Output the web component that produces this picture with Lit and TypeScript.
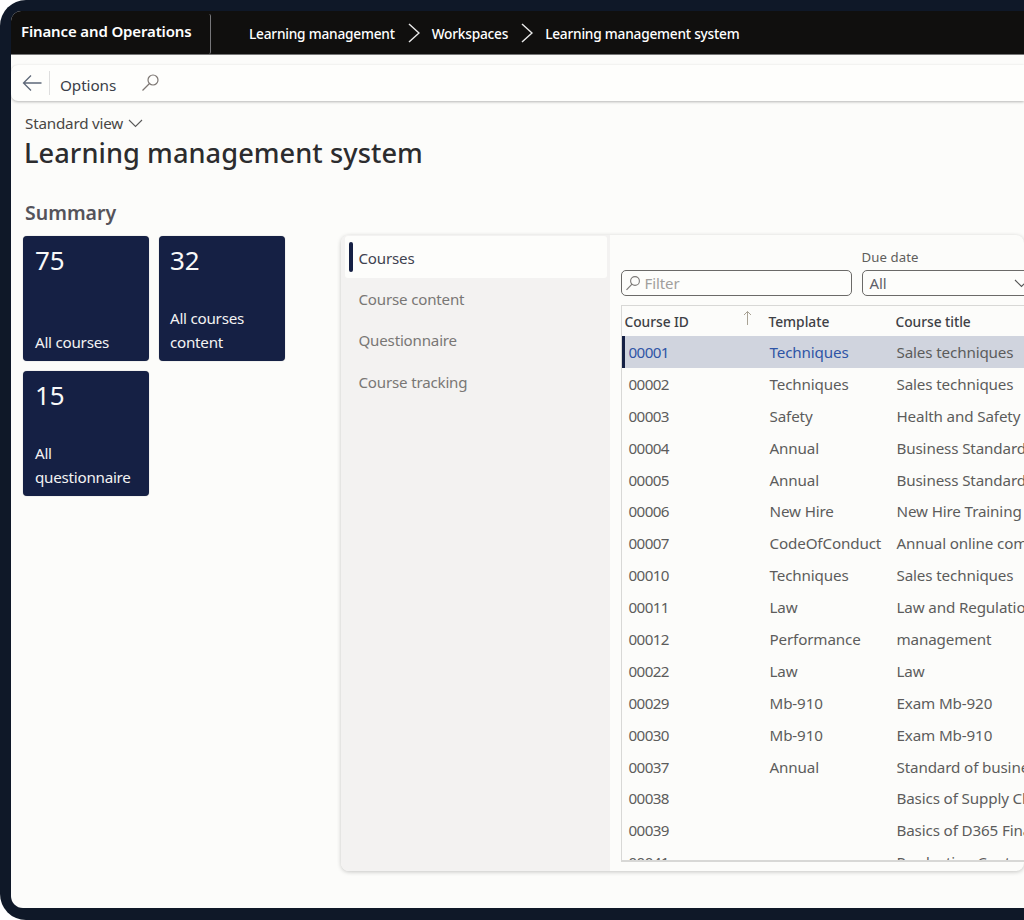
import { LitElement, html, css, svg } from "lit";
import { customElement } from "lit/decorators.js";

const rows: [string, string, string][] = [
  ["00001", "Techniques", "Sales techniques"],
  ["00002", "Techniques", "Sales techniques"],
  ["00003", "Safety", "Health and Safety"],
  ["00004", "Annual", "Business Standards"],
  ["00005", "Annual", "Business Standards"],
  ["00006", "New Hire", "New Hire Training"],
  ["00007", "CodeOfConduct", "Annual online compliance"],
  ["00010", "Techniques", "Sales techniques"],
  ["00011", "Law", "Law and Regulations"],
  ["00012", "Performance", "management"],
  ["00022", "Law", "Law"],
  ["00029", "Mb-910", "Exam Mb-920"],
  ["00030", "Mb-910", "Exam Mb-910"],
  ["00037", "Annual", "Standard of business"],
  ["00038", "", "Basics of Supply Chain"],
  ["00039", "", "Basics of D365 Finance"],
  ["00041", "", "Production Control"],
];

const chevron = svg`<path d="M1 1l10 9-10 9" fill="none" stroke="currentColor" stroke-width="1.5"/>`;

@customElement("app-root")
export class AppRoot extends LitElement {
  static styles = css`
    :host { display: block; width: 1024px; height: 920px; overflow: hidden; background: #fff;
      font-family: "Noto Sans", "Open Sans", sans-serif; color: #323130; }
    * { box-sizing: border-box; }
    .frame { height: 920px; background: #0f1828; border-radius: 26px 0 0 26px; padding: 11px 0 12px 11px; }
    .screen { height: 897px; background: #fcfcfa; border-radius: 10px 0 0 12px; overflow: hidden; }
    .top { height: 44px; background: #100f0e; color: #fff; display: flex; align-items: center; border-bottom: 1px solid #777; }
    .brand { width: 200px; height: 40px; margin-top: 2px; padding-left: 10px; display: flex; align-items: center; font-size: 15px; font-weight: 600; letter-spacing: -0.14px; border-right: 1px solid #77777a; padding-bottom: 6px; border-radius: 0 2px 2px 0; }
    .crumbs { display: flex; align-items: center; padding-left: 38px; padding-top: 2px; font-size: 13.7px; letter-spacing: -0.22px; font-weight: 500; }
    .crumbs svg { width: 12px; height: 20px; margin: -2px 12px 0 13px; color: #e6e6e6; }
    .bar { height: 36px; margin-top: 10px; background: #fefefc; border-radius: 7px 0 0 7px; box-shadow: 0 1px 3px rgba(0,0,0,.28); display: flex; align-items: center; }
    .back { width: 20px; height: 18px; margin-left: 11px; color: #5e6878; }
    .sep { width: 1px; height: 24px; background: #dedede; margin-left: 7px; }
    .opt { margin-left: 10px; font-size: 15.3px; letter-spacing: -0.1px; color: #3b3f48; padding-top: 3px; }
    .find { width: 19px; height: 19px; margin-left: 25px; color: #7d7773; margin-top: -1px; }
    .view { margin: 13px 0 0 14px; height: 18px; font-size: 15.2px; letter-spacing: -0.2px; color: #484644; display: flex; align-items: center; }
    .view svg { width: 15px; height: 9px; margin-left: 5px; color: #5a5a5a; }
    h1 { margin: 1px 0 0 13px; font-size: 27.2px; font-weight: 500; line-height: 40px; height: 40px; color: #2c2c2e; letter-spacing: .06px; white-space: nowrap; }
    h2 { margin: 27px 0 0 14px; font-size: 19.5px; line-height: 26px; height: 26px; font-weight: 600; color: #55535a; }
    .content { display: flex; margin-top: 9px; align-items: flex-start; }
    .tiles { width: 262px; margin: 1px 0 0 12px; display: grid; grid-template-columns: 125.5px 125.5px; grid-auto-rows: 125px; gap: 10px 10.5px; }
    .tile { background: #152044; border-radius: 4px; color: #fff; padding: 8px 12px 7px; display: flex; flex-direction: column; box-shadow: 0 0 1px rgba(0,0,0,.4); }
    .num { font-size: 26px; line-height: 32px; color: #f8f8f8; }
    .tile:nth-child(2) { padding-left: 11px; }
    .lab { margin-top: auto; font-size: 15.2px; line-height: 23.5px; letter-spacing: -0.25px; color: #f3f3f3; }
    .panel { margin-left: 56px; width: 800px; height: 636px; display: flex; background: #fcfcfa; border-radius: 8px; box-shadow: 0 1px 4px rgba(0,0,0,.22); overflow: hidden; }
    .tabs { width: 269px; flex: none; background: #f3f2f1; padding: 1px 3px 0 4px; display: flex; flex-direction: column; }
    .tab { height: 41.5px; display: flex; align-items: center; padding: 1px 0 0 14px; font-size: 15.1px; letter-spacing: -0.18px; color: #797775; position: relative; }
    .tab.on { background: #fdfdfb; color: #3f4250; border-radius: 3px; padding-top: 3px; }
    .tab.on::before { content: ""; position: absolute; left: 4px; top: 6px; bottom: 6px; width: 4px; background: #152044; border-radius: 2px; }
    .main { flex: 1; padding: 13px 0 0 11px; min-width: 0; }
    .filters { display: flex; align-items: flex-end; gap: 10px; height: 48px; }
    .box { height: 26px; border: 1.5px solid #6b6a68; border-radius: 5px; display: flex; align-items: center; background: #fdfdfb; font-size: 15px; padding-left: 7px; letter-spacing: -0.1px; }
    .box.f { width: 231px; flex: none; color: #a19f9d; padding-left: 3px; }
    .box.f svg { width: 16px; height: 16px; margin-right: 4px; color: #7d7a78; }
    .dd { width: 300px; flex: none; }
    .dd label { display: block; font-size: 13.2px; line-height: 18px; letter-spacing: .1px; color: #605e5c; height: 22px; }
    .dd .box { color: #5e6068; position: relative; }
    .dd .box svg { position: absolute; left: 151px; top: 8px; width: 15px; height: 9px; color: #555; }
    .grid { margin-top: 9px; width: 700px; height: 557px; border: 1px solid #d8d8d6; border-width: 1px 0 2px 1.5px; overflow: hidden; }
    .head, .row { display: grid; align-items: center; white-space: nowrap; }
    .head { grid-template-columns: 144px 127px 1fr; height: 30px; padding: 1px 0 0 3px; font-size: 13.8px; font-weight: 500; letter-spacing: -0.05px; color: #3e4045; }
    .head span:first-child { position: relative; }
    .head svg { position: absolute; left: 118px; top: -2px; width: 9px; height: 16px; color: #a8a294; }
    .row { grid-template-columns: 141px 127px 1fr; height: 31.9px; padding-left: 7px; font-size: 15.2px; letter-spacing: -0.14px; color: #5c5c5c; position: relative; }
    .row .id { letter-spacing: -0.6px; }
    .row.sel { background: #d0d4de; }
    .row.sel::before { content: ""; position: absolute; left: 0; top: 0; bottom: 0; width: 3px; background: #152044; }
    .row.sel .lnk { color: #2f55a6; }
  `;

  render() {
    return html`<div class="frame"><div class="screen">
      <header class="top">
        <div class="brand">Finance and Operations</div>
        <nav class="crumbs">
          <span>Learning management</span><svg viewBox="0 0 12 20">${chevron}</svg>
          <span>Workspaces</span><svg viewBox="0 0 12 20">${chevron}</svg>
          <span>Learning management system</span>
        </nav>
      </header>
      <div class="bar">
        <svg class="back" viewBox="0 0 20 18"><path d="M19.5 9H1.5M9 1.5 1.5 9 9 16.5" fill="none" stroke="currentColor" stroke-width="1.3"/></svg>
        <div class="sep"></div>
        <span class="opt">Options</span>
        <svg class="find" viewBox="0 0 19 19"><circle cx="12" cy="7" r="5" fill="none" stroke="currentColor" stroke-width="1.2"/><path d="M8.5 10.5 1.5 17.5" stroke="currentColor" stroke-width="1.3"/></svg>
      </div>
      <div class="view">Standard view<svg viewBox="0 0 15 9"><path d="M1 1l6.5 6.5L14 1" fill="none" stroke="currentColor" stroke-width="1.1"/></svg></div>
      <h1>Learning management system</h1>
      <h2>Summary</h2>
      <div class="content">
        <div class="tiles">
          <div class="tile"><span class="num">75</span><span class="lab">All courses</span></div>
          <div class="tile"><span class="num">32</span><span class="lab">All courses<br />content</span></div>
          <div class="tile"><span class="num">15</span><span class="lab">All<br />questionnaire</span></div>
        </div>
        <section class="panel">
          <div class="tabs">
            <div class="tab on">Courses</div>
            <div class="tab">Course content</div>
            <div class="tab">Questionnaire</div>
            <div class="tab">Course tracking</div>
          </div>
          <div class="main">
            <div class="filters">
              <div class="box f"><svg viewBox="0 0 16 16"><circle cx="10" cy="6" r="4.4" fill="none" stroke="currentColor" stroke-width="1.1"/><path d="M7 9.2 1.5 14.8" stroke="currentColor" stroke-width="1.2"/></svg>Filter</div>
              <div class="dd"><label>Due date</label><div class="box">All<svg viewBox="0 0 15 9"><path d="M1 1l6.5 6.5L14 1" fill="none" stroke="currentColor" stroke-width="1.1"/></svg></div></div>
            </div>
            <div class="grid">
              <div class="head"><span>Course ID<svg viewBox="0 0 9 16"><path d="M4.5 15V1.5M1 5l3.5-3.5L8 5" fill="none" stroke="currentColor" stroke-width="1"/></svg></span><span>Template</span><span>Course title</span></div>
              ${rows.map((r, i) => html`<div class="row ${i === 0 ? "sel" : ""}"><span class="lnk id">${r[0]}</span><span class="lnk">${r[1]}</span><span>${r[2]}</span></div>`)}
            </div>
          </div>
        </section>
      </div>
    </div></div>`;
  }
}
